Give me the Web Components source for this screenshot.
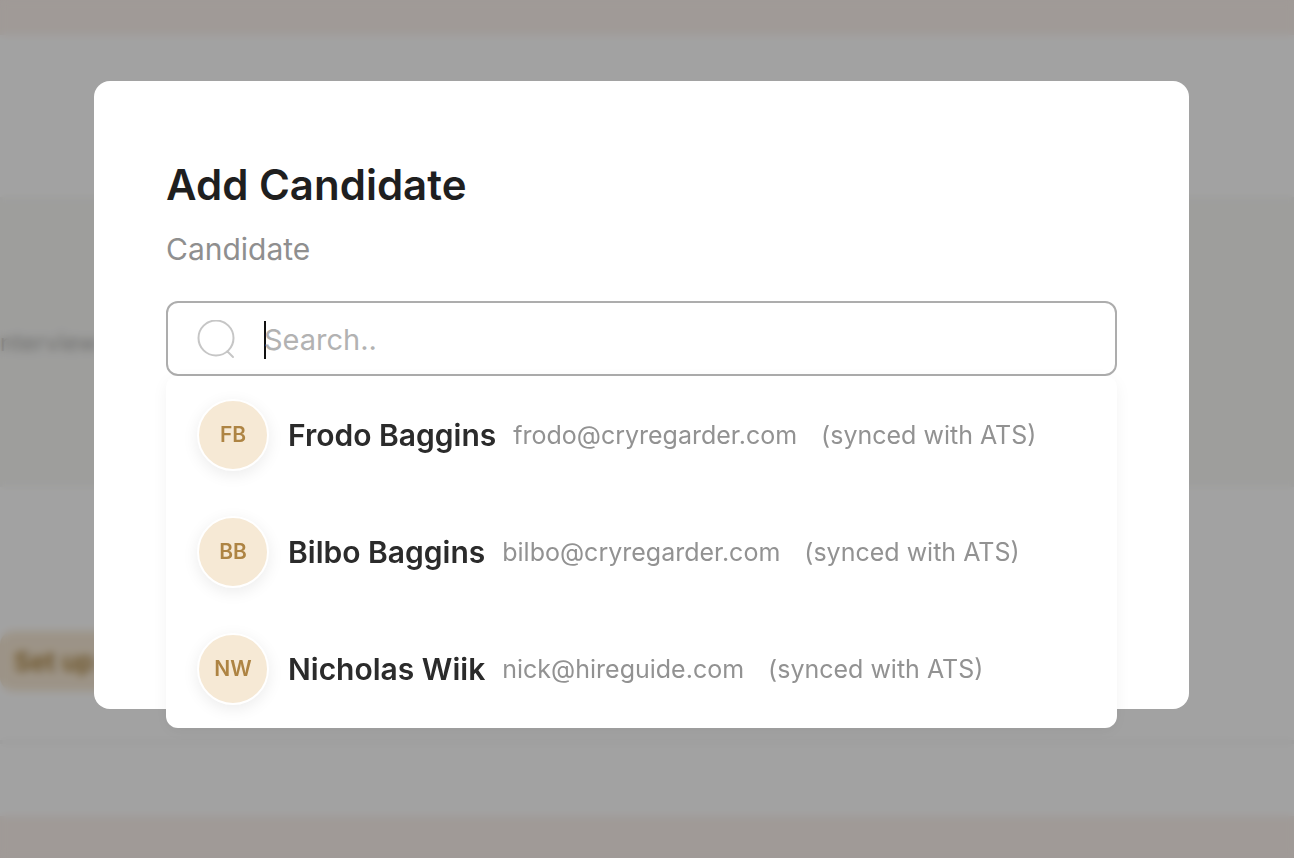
<!DOCTYPE html>
<html lang="en">
<head>
<meta charset="utf-8">
<meta name="viewport" content="width=device-width, initial-scale=1">
<title>Add Candidate</title>
<style>
  body { margin: 0; min-height: 100vh; overflow: hidden; background: #fefefe; font-family: Inter, "Liberation Sans", sans-serif; color: #1f1f1f; }
</style>
</head>
<body>
<interview-page></interview-page>
<candidate-dialog heading="Add Candidate">
  <candidate-search label="Candidate" placeholder="Search..">
    <candidate-option initials="FB" name="Frodo Baggins" email="frodo@cryregarder.com">(synced with ATS)</candidate-option>
    <candidate-option initials="BB" name="Bilbo Baggins" email="bilbo@cryregarder.com">(synced with ATS)</candidate-option>
    <candidate-option initials="NW" name="Nicholas Wiik" email="nick@hireguide.com">(synced with ATS)</candidate-option>
  </candidate-search>
</candidate-dialog>
<script>
class BaseElement extends HTMLElement {
  constructor() {
    super();
    this.attachShadow({ mode: 'open' });
  }
  connectedCallback() {
    this.shadowRoot.innerHTML = this.render();
  }
}

// The page that lies under the dialog.
class InterviewPage extends BaseElement {
  render() {
    return `
      <style>
        :host { display: flex; flex-direction: column; height: 100vh; overflow: hidden; background: #faf1ec; }
        main { flex: 1; margin: 35px 0 42px; background: #fefefe; display: flex; flex-direction: column; }
        .stage { margin-top: 162px; height: 290px; background: #f7f7f5; display: flex; align-items: center; }
        h2 { margin: 0; font-size: 24px; font-weight: 400; color: #b0b0ae; }
        .actions { flex: 1; display: flex; align-items: flex-start; padding-top: 144px; border-bottom: 4px solid #f5f5f5; }
        button { margin: 0; height: 60px; padding: 0 24px 0 14px; border: 0; border-radius: 14px; background: #f5e7d3; color: #a57d35; font: 600 26px Inter, sans-serif; }
        .foot { height: 72px; }
      </style>
      <main>
        <section class="stage"><h2>nterview</h2></section>
        <div class="actions"><button type="button">Set up</button></div>
        <div class="foot"></div>
      </main>`;
  }
}
customElements.define('interview-page', InterviewPage);

class CandidateDialog extends BaseElement {
  render() {
    return `
      <style>
        :host { position: fixed; inset: 0; display: block; padding: 81px 105px 0 94px; background: rgba(0, 0, 0, .36); backdrop-filter: blur(4px); }
        section { box-sizing: border-box; min-height: 628px; padding: 72px; border-radius: 16px; background: #fff; }
        h1 { margin: 0; font-size: 42px; font-weight: 600; line-height: 64px; }
      </style>
      <section role="dialog" aria-modal="true" aria-labelledby="title">
        <h1 id="title">${this.getAttribute('heading')}</h1>
        <slot></slot>
      </section>`;
  }
}
customElements.define('candidate-dialog', CandidateDialog);

class CandidateSearch extends BaseElement {
  render() {
    return `
      <style>
        :host { display: block; position: relative; }
        label { display: block; margin-bottom: 20px; font-size: 30px; line-height: 64px; color: #8f8f8f; }
        .field { box-sizing: border-box; height: 75px; display: flex; align-items: center; padding: 2px 28px 0 29px; border: 2px solid #adadad; border-radius: 12px; }
        svg { width: 40px; height: 40px; margin-right: 27px; fill: none; stroke: #c6c6c6; stroke-width: 2; stroke-linecap: round; }
        .caret { width: 2px; height: 38px; margin-right: -2px; background: #111; }
        input { flex: 1; min-width: 0; padding: 0; border: 0; outline: 0; background: none; font: 29px Inter, sans-serif; color: #1f1f1f; }
        input::placeholder { color: #b2b2b2; opacity: 1; }
        .menu { position: absolute; top: 100%; left: 0; right: 0; padding-bottom: 1px; background: #fff; border-radius: 12px; box-shadow: 0 4px 16px rgba(0, 0, 0, .05); }
      </style>
      <label for="query">${this.getAttribute('label')}</label>
      <div class="field">
        <svg viewBox="0 0 40 40" aria-hidden="true"><circle cx="19" cy="18" r="17.500"/><path d="M30.500 31.500 36 37"/></svg>
        <span class="caret"></span>
        <input id="query" type="text" placeholder="${this.getAttribute('placeholder')}" autocomplete="off">
      </div>
      <div class="menu" role="listbox"><slot></slot></div>`;
  }
}
customElements.define('candidate-search', CandidateSearch);

class CandidateOption extends BaseElement {
  render() {
    this.setAttribute('role', 'option');
    return `
      <style>
        :host { display: flex; align-items: center; height: 117px; padding-left: 31px; white-space: nowrap; font-size: 25px; color: #929292; }
        .avatar { display: flex; align-items: center; justify-content: center; width: 68px; height: 68px; margin-right: 19px; border: 2px solid #fff; border-radius: 50%; background: #f6e9d5; box-shadow: 0 4px 16px rgba(0, 0, 0, .08); color: #ae8443; font-size: 21px; font-weight: 600; }
        .name { margin-right: 17px; font-size: 30px; font-weight: 600; color: #2b2b2b; }
        .email { margin-right: 24px; }
      </style>
      <span class="avatar">${this.getAttribute('initials')}</span>
      <span class="name">${this.getAttribute('name')}</span>
      <span class="email">${this.getAttribute('email')}</span>
      <slot></slot>`;
  }
}
customElements.define('candidate-option', CandidateOption);
</script>
</body>
</html>
